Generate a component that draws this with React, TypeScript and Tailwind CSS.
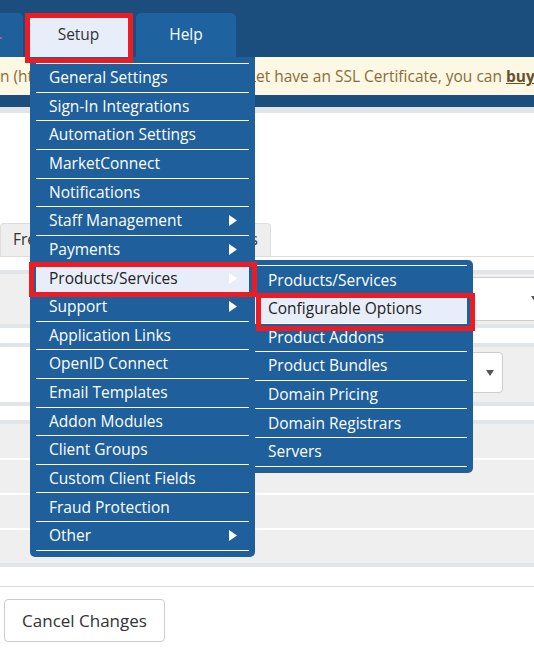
import * as React from 'react';

type MenuItem = { label: string; sub?: boolean; active?: boolean };

const mainItems: MenuItem[] = [
    { label: 'General Settings' },
    { label: 'Sign-In Integrations' },
    { label: 'Automation Settings' },
    { label: 'MarketConnect' },
    { label: 'Notifications' },
    { label: 'Staff Management', sub: true },
    { label: 'Payments', sub: true },
    { label: 'Products/Services', sub: true, active: true },
    { label: 'Support', sub: true },
    { label: 'Application Links' },
    { label: 'OpenID Connect' },
    { label: 'Email Templates' },
    { label: 'Addon Modules' },
    { label: 'Client Groups' },
    { label: 'Custom Client Fields' },
    { label: 'Fraud Protection' },
    { label: 'Other', sub: true },
];

const subItems: MenuItem[] = [
    { label: 'Products/Services' },
    { label: 'Configurable Options', active: true },
    { label: 'Product Addons' },
    { label: 'Product Bundles' },
    { label: 'Domain Pricing' },
    { label: 'Domain Registrars' },
    { label: 'Servers' },
];

const Caret: React.FC = () => (
    <svg width="8" height="11" viewBox="0 0 8 11" className="shrink-0">
        <polygon points="0,0 8,5.5 0,11" fill="#ffffff" />
    </svg>
);

const DownArrow: React.FC = () => (
    <svg width="8" height="6" viewBox="0 0 8 6" className="shrink-0">
        <polygon points="0,0 8,0 4,6" fill="#555555" />
    </svg>
);

const SubMenu: React.FC = () => (
    <div className="absolute top-[-4px] left-[219px] w-[218px] rounded-r-[5px] bg-[#1e5f9c] pt-[5px] pr-[6px] pb-[6px]">
        <ul className="border-t border-white">
            {subItems.map((item) => (
                <li
                    key={item.label}
                    className={
                        item.active
                            ? 'flex h-[28.6px] items-center border-b border-white bg-[#e8eef9] pl-[13px] text-[#222]'
                            : 'flex h-[28.6px] items-center border-b border-white pl-[13px] text-white'
                    }
                >
                    {item.label}
                </li>
            ))}
        </ul>
    </div>
);

const SetupMenu: React.FC = () => (
    <div className="absolute top-[44px] left-[5px] z-10 w-[225px] rounded-b-[5px] bg-[#1e5f9c] px-[6px] pt-[6px] pb-[6px] text-[15.5px]">
        <ul className="border-t border-white">
            {mainItems.map((item) => (
                <li
                    key={item.label}
                    className={
                        item.active
                            ? 'relative flex h-[28.63px] items-center justify-between border-b border-white bg-[#e8eef9] pr-[12px] pl-[13px] text-[#222]'
                            : 'relative flex h-[28.63px] items-center justify-between border-b border-white pr-[12px] pl-[13px] text-white'
                    }
                >
                    <span>{item.label}</span>
                    {item.sub && <Caret />}
                    {item.active && <SubMenu />}
                </li>
            ))}
        </ul>
    </div>
);

export default function App() {
    return (
        <div className="relative h-[649px] w-[534px] overflow-hidden bg-white font-['Open_Sans','DejaVu_Sans',sans-serif] text-[15.5px] text-[#333]">
            {/* top bar */}
            <header className="bg-[#1b4d7d] pt-[13px] pb-[12px]">
                <nav className="flex h-[44px]">
                    <div className="relative w-[23px] rounded-tr-[5px] bg-[#1e5f9c]">
                        <span className="absolute top-[24px] left-0 h-[2px] w-[2px] bg-[#a0609a]" />
                    </div>
                    <div className="relative ml-[2px] w-[107px]">
                        <div className="flex h-full items-center justify-center bg-[#e8eef9] text-[#333]">
                            Setup
                        </div>
                        <SetupMenu />
                    </div>
                    <div className="ml-[4px] flex w-[100px] items-center justify-center rounded-t-[5px] bg-[#1f62a0] text-white">
                        Help
                    </div>
                </nav>
                <div className="flex h-[38px] items-center overflow-hidden bg-[#fcf8e3] pt-[2px] whitespace-nowrap text-[#8a6d3b]">
                    <span className="inline-block w-[256px] shrink-0 overflow-hidden">
                        n (https://www.example.com). If you do not y
                    </span>
                    <span className="shrink-0">
                        et have an SSL Certificate, you can{' '}
                        <a className="font-bold text-[#66512c] underline">buy</a> one
                    </span>
                </div>
            </header>
            <div className="h-[6px] bg-[#e1e5e8]" />

            {/* page body */}
            <div className="h-[110px]" />

            <div className="flex h-[34px] items-end border-b border-[#dddddd]">
                <div className="flex h-[33px] w-[158px] items-center rounded-t-[4px] border border-b-0 border-[#dddddd] bg-[#eeeeee] pl-[12px]">
                    Free Domain
                </div>
                <div className="ml-[2px] flex h-[33px] w-[111px] items-center justify-end rounded-t-[4px] border border-b-0 border-[#dddddd] bg-[#eeeeee] pr-[12px]">
                    Cross-sells
                </div>
            </div>

            <div className="h-[13px]" />

            <section className="border-y-4 border-[#e1e5e8] bg-[#efefef]">
                <div className="h-[50px] pt-[3px]">
                    <div className="ml-[260px] flex h-[44px] w-[290px] items-center justify-end rounded-[4px] border border-[#cccccc] bg-white pr-[10px]">
                        <DownArrow />
                    </div>
                </div>
            </section>

            <div className="h-[15px]" />

            <section className="border-y-4 border-[#e1e5e8]">
                <div className="flex h-[55px]">
                    <div className="w-[230px] bg-white" />
                    <div className="flex-1 bg-[#efefef] pt-[5px]">
                        <div className="ml-[210px] flex h-[41px] w-[63px] items-center justify-end rounded-[4px] border border-[#cccccc] bg-white pr-[8px]">
                            <DownArrow />
                        </div>
                    </div>
                </div>
            </section>

            <div className="h-[14px]" />

            <section className="flex flex-col gap-[2px] border-y-4 border-[#e1e5e8] bg-white">
                <div className="h-[34px] bg-[#efefef]" />
                <div className="h-[33px] bg-[#efefef]" />
                <div className="h-[33px] bg-[#efefef]" />
                <div className="h-[33px] bg-[#efefef]" />
            </section>

            <div className="h-[20px] border-b border-[#dddddd]" />

            <div className="pt-[12px] pl-[4px]">
                <button className="h-[43px] w-[161px] rounded-[4px] border border-[#cccccc] bg-white text-[17px] text-[#333]">
                    Cancel Changes
                </button>
            </div>

            {/* red annotation boxes */}
            <div className="pointer-events-none absolute top-[13px] left-[25px] z-20 h-[50px] w-[108px] border-[5px] border-[#ec1c24]" />
            <div className="pointer-events-none absolute top-[262px] left-[29px] z-20 h-[35px] w-[228px] border-[5px] border-[#ec1c24]" />
            <div className="pointer-events-none absolute top-[293px] left-[256px] z-20 h-[38px] w-[219px] border-[5px] border-[#ec1c24]" />
        </div>
    );
}
